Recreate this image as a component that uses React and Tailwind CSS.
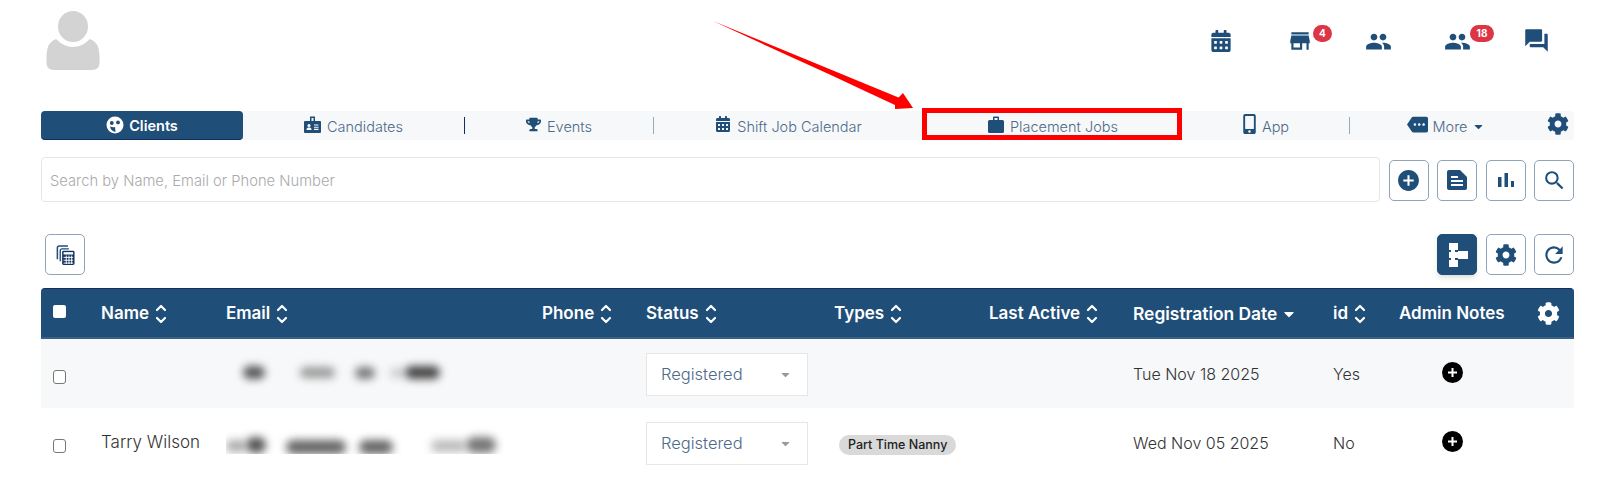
import { FaCalendarAlt, FaCog, FaTrophy, FaMobileAlt, FaCaretDown } from 'react-icons/fa';
import { MdStore, MdPeople, MdForum, MdMore, MdAddCircle, MdSearch, MdRefresh } from 'react-icons/md';

const Sort = () => (
    <svg width="12" height="20" viewBox="0 0 12 20" fill="none" stroke="white" strokeWidth="2.2" strokeLinecap="round" strokeLinejoin="round" className="shrink-0">
        <path d="M2 6 L6 2 L10 6" />
        <path d="M2 14 L6 18 L10 14" />
    </svg>
);

const Face = () => (
    <svg width="18" height="18" viewBox="0 0 18 18" className="-mt-[3px]">
        <circle cx="9" cy="9" r="8.5" fill="white" />
        <circle cx="5.8" cy="7" r="1.9" fill="#1f4e79" />
        <circle cx="12" cy="6.4" r="1.9" fill="#1f4e79" />
        <path d="M4 10.5 Q8 12 9 10.8 L9.5 16 Q5 15 4 10.5Z" fill="#1f4e79" />
    </svg>
);

const Badge = () => (
    <svg width="17" height="17" viewBox="0 0 17 17">
        <path d="M6 0.5h5v4.5h5a1 1 0 0 1 1 1v10a1 1 0 0 1-1 1H1a1 1 0 0 1-1-1V6a1 1 0 0 1 1-1h5z" fill="#1f4e79" />
        <rect x="7.5" y="2" width="2" height="3" fill="#f7f8fa" />
        <circle cx="5" cy="9.5" r="1.5" fill="white" />
        <path d="M2.5 14c0-2 1-2.5 2.5-2.5S7.500 12 7.500 14z" fill="white" />
        <path d="M10 9h4.500M10 11.200h4.500M10 13.400h4.500" stroke="white" strokeWidth="1.100" />
    </svg>
);

const Bag = () => (
    <svg width="16" height="17" viewBox="0 0 16 17" fill="#1f4e79">
        <path d="M5 4V1.500A1 1 0 0 1 6 .5h4a1 1 0 0 1 1 1V4h3.500A1.500 1.500 0 0 1 16 5.500V15.500A1.500 1.500 0 0 1 14.500 17H1.500A1.500 1.500 0 0 1 0 15.500V5.500A1.500 1.500 0 0 1 1.500 4zM6.500 4h3V2h-3z" fillRule="evenodd" />
    </svg>
);

const Doc = () => (
    <svg width="20" height="20" viewBox="0 0 20 20">
        <path d="M2 0H13L20 7V18A2 2 0 0 1 18 20H2A2 2 0 0 1 0 18V2A2 2 0 0 1 2 0Z" fill="#1f4e79" />
        <path d="M4 7h7M4 11h12M4 15h12" stroke="white" strokeWidth="2" />
    </svg>
);

const Bars = () => (
    <svg width="16" height="14" viewBox="0 0 16 14" fill="#1f4e79">
        <rect x="0" y="4" width="3.500" height="10" />
        <rect x="6.500" y="0" width="3.500" height="14" />
        <rect x="13" y="8" width="3" height="6" />
    </svg>
);

const Calculators = () => (
    <svg width="20" height="20" viewBox="0 0 20 21">
        <path d="M2 15V3a2 2 0 0 1 2-2h9" fill="none" stroke="#1f4e79" strokeWidth="1.600" />
        <path d="M5 17V6a2 2 0 0 1 2-2h7" fill="none" stroke="#1f4e79" strokeWidth="1.400" />
        <rect x="7" y="6" width="13" height="15" rx="1.500" fill="#12305f" />
        <rect x="8.500" y="7.500" width="10" height="2.500" fill="white" />
        <path d="M8.500 13h10M8.500 16h10M8.500 19h10M11.300 11v9M14.200 11v9M17 11v9" stroke="white" strokeWidth="1" />
    </svg>
);

const Tree = () => (
    <svg width="19" height="24" viewBox="0 0 19 24" fill="white" className="ml-[2px]">
        <path d="M0 0H9V7H6V9H9V15H6V17H9V24H0V17H2V15H0V9H2V7H0Z" />
        <rect x="9" y="8" width="10" height="8" />
    </svg>
);

const tabs = [
    { label: 'Candidates', icon: <Badge />, w: 'w-[221px]', sep: 'bg-[#12305f]' },
    { label: 'Events', icon: <FaTrophy className="text-[15px]" />, w: 'w-[188px]', sep: 'bg-[#9aa8b8]' },
    { label: 'Shift Job Calendar', icon: <FaCalendarAlt className="text-[16px]" />, w: 'w-[269px]' },
    { label: 'Placement Jobs', icon: <Bag />, w: 'w-[258px]' },
    { label: 'App', icon: <FaMobileAlt className="w-[13px] h-[20px]" />, w: 'w-[166px]', sep: 'bg-[#9aa8b8]' },
];

const columns = [
    { label: 'Name', sort: true, w: 'w-[125px]' },
    { label: 'Email', sort: true, w: 'w-[316px]' },
    { label: 'Phone', sort: true, w: 'w-[104px]' },
    { label: 'Status', sort: true, w: 'w-[188px]' },
    { label: 'Types', sort: true, w: 'w-[155px]' },
    { label: 'Last Active', sort: true, w: 'w-[144px]' },
    { label: 'Registration Date', caret: true, w: 'w-[200px]' },
    { label: 'id', sort: true, w: 'w-[66px]' },
];

const IconButton = ({ children, active }) => (
    <button className={`w-10 h-[41px] flex items-center justify-center rounded-[5px] border text-[#1f4e79] ${active ? 'bg-[#1f4e79] border-[#1f4e79] shadow-md' : 'bg-white border-[#8fa3ba]'}`}>
        {children}
    </button>
);

const Blob = ({ className }) => <div className={`rounded-full blur-[4px] ${className}`} />;

const StatusSelect = () => (
    <div className="w-[162px] h-[43px] mt-[1px] flex items-center justify-between bg-white border border-[#e6e6e6] pl-[14px] pr-[15px] text-[16.500px] font-light text-[#4d6a88]">
        Registered
        <FaCaretDown className="text-[13px] text-[#999]" />
    </div>
);

const Row = ({ bg, name, date, id, type, blobs }) => (
    <div className={`flex h-[69px] items-center ${bg}`}>
        <div className="w-[60px] pl-[12px] pt-[6px]">
            <div className="w-[13px] h-[14px] rounded-[3px] border border-[#777] bg-white" />
        </div>
        <div className="w-[125px] text-[17px] font-light text-[#333]">{name}</div>
        <div className="w-[316px] h-[69px]">{blobs}</div>
        <div className="w-[104px]" />
        <div className="w-[188px]"><StatusSelect /></div>
        <div className="w-[155px]">
            {type && (
                <span className="inline-block ml-[5px] px-[9px] h-[20px] leading-[20px] rounded-full bg-[#d9d9d9] text-[12.500px] font-medium text-[#222]">{type}</span>
            )}
        </div>
        <div className="w-[144px]" />
        <div className="w-[200px] text-[16px] font-light text-[#333]">{date}</div>
        <div className="w-[66px] text-[16px] font-light text-[#333]">{id}</div>
        <div className="w-[175px] pl-[43px]">
            <div className="w-[21px] h-[21px] rounded-full bg-black flex items-center justify-center -mt-[2px]">
                <svg width="11" height="11" viewBox="0 0 11 11"><path d="M5.500 1v9M1 5.500h9" stroke="white" strokeWidth="2" /></svg>
            </div>
        </div>
    </div>
);

export default function App() {
    return (
        <div className="relative w-[1600px] h-[479px] overflow-hidden bg-white pl-[41px] pr-[26px] font-['Inter','Liberation_Sans',sans-serif]">
            {/* arrow */}
            <svg className="absolute left-0 top-0 z-10 pointer-events-none" width="1600" height="130" viewBox="0 0 1600 130">
                <polygon points="713,21 767,46 800,61 833,76 867,92 895,105 895,109 913,108 903,93 898.500,97.500" fill="#ff0000" />
            </svg>

            {/* top bar */}
            <div className="flex justify-between h-[111px]">
                <svg className="ml-[5px] mt-[11px]" width="54" height="60" viewBox="0 0 54 60">
                    <ellipse cx="27" cy="15.500" rx="15" ry="15.500" fill="#d3d3d3" />
                    <path d="M10 28 Q18 36 27 36 Q36 36 44 28 Q53 31 53.500 44 V52 Q53.500 59 46 59 H8 Q0.500 59 0.500 52 V44 Q1 31 10 28Z" fill="#d3d3d3" />
                </svg>
                <div className="flex h-[62px] -mr-[2px] text-[#1f4e79]">
                    <div className="w-[79px] pt-[30px] flex justify-center"><FaCalendarAlt className="text-[22px]" /></div>
                    <div className="relative w-[79px] pt-[28px] flex justify-center">
                        <MdStore className="text-[26px]" />
                        <span className="absolute left-[53px] top-[25px] w-[19px] h-[17px] rounded-full bg-[#dc3545] text-white text-[10px] font-bold flex items-center justify-center">4</span>
                    </div>
                    <div className="w-[79px] pt-[28px] flex justify-center"><MdPeople className="text-[27px]" /></div>
                    <div className="relative w-[79px] pt-[28px] flex justify-center">
                        <MdPeople className="text-[27px]" />
                        <span className="absolute left-[52px] top-[25px] w-[24px] h-[17px] rounded-full bg-[#dc3545] text-white text-[10px] font-bold flex items-center justify-center">18</span>
                    </div>
                    <div className="w-[79px] pt-[27px] flex justify-center"><MdForum className="text-[27px]" /></div>
                </div>
            </div>

            {/* nav */}
            <div className="relative flex items-center h-[29px] bg-[#f7f8fa] rounded-[4px] text-[14.500px] font-light text-[#4d6a88]">
                <div className="w-[202px] h-[29px] pt-[2px] flex items-center justify-center gap-[5px] bg-[#1f4e79] border-b border-[#12305f] rounded-[4px] text-white font-semibold text-[14.500px]">
                    <Face /> Clients
                </div>
                {tabs.map((tab) => (
                    <div key={tab.label} className="flex items-center">
                        <div className={`flex items-center justify-center gap-[6px] pt-[2px] ${tab.w}`}>
                            <span className="text-[#1f4e79] -mt-[5px]">{tab.icon}</span>
                            {tab.label}
                        </div>
                        <span className={`w-px h-[17px] ${tab.sep || ''}`} />
                    </div>
                ))}
                <div className="w-[192px] pt-[2px] flex items-center justify-center gap-[4px]">
                    <MdMore className="text-[21px] text-[#1f4e79] -mt-[5px]" />
                    More
                    <FaCaretDown className="text-[13px] text-[#1f4e79]" />
                </div>
                <FaCog className="text-[22px] text-[#1f4e79] ml-[5px] -mt-[3px]" />
                {/* highlight box */}
                <div className="absolute left-[881px] -top-[3px] w-[260px] h-[32px] border-[5.500px] border-[#ff0000]" />
            </div>

            {/* search */}
            <div className="flex items-center mt-[17px] h-[45px]">
                <div className="flex-1 h-[45px] flex items-center px-[8px] pt-[4px] border border-[#e6e6e6] rounded-[4px] text-[14.750px] font-light text-[#aaa]">
                    Search by Name, Email or Phone Number
                </div>
                <div className="flex gap-[8.500px] ml-[8.500px] mt-[1px]">
                    <IconButton><MdAddCircle className="text-[25px]" /></IconButton>
                    <IconButton><Doc /></IconButton>
                    <IconButton><Bars /></IconButton>
                    <IconButton><MdSearch className="text-[25px]" /></IconButton>
                </div>
            </div>

            {/* toolbar */}
            <div className="flex items-center justify-between mt-[32px] pl-[4px]">
                <IconButton><Calculators /></IconButton>
                <div className="flex gap-[8.500px]">
                    <IconButton active><Tree /></IconButton>
                    <IconButton><FaCog className="text-[22px]" /></IconButton>
                    <IconButton><MdRefresh className="text-[26px]" /></IconButton>
                </div>
            </div>

            {/* table */}
            <div className="mt-[13px]">
                <div className="flex items-center h-[51px] pt-[2px] bg-[#1f4e79] border-t border-[#12305f] border-b-2 border-b-[#3a6288] rounded-t-[4px] text-white text-[17px] font-semibold">
                    <div className="w-[60px] pl-[12px]">
                        <div className="w-[13px] h-[13px] rounded-[2px] bg-white -mt-[5px]" />
                    </div>
                    {columns.map((col) => (
                        <div key={col.label} className={`flex items-center ${col.caret ? 'gap-[4px] text-[17.400px]' : 'gap-[6px]'} ${col.w}`}>
                            {col.label}
                            {col.sort && <Sort />}
                            {col.caret && <FaCaretDown className="text-[16px]" />}
                        </div>
                    ))}
                    <div className="w-[175px] flex items-center justify-between pr-[14px]">
                        Admin Notes
                        <FaCog className="text-[23px] -mt-[2px]" />
                    </div>
                </div>
                <Row
                    bg="bg-[#f7f8fa]"
                    date="Tue Nov 18 2025"
                    id="Yes"
                    blobs={
                        <div className="flex items-center pt-[27px] pl-[17px]">
                            <Blob className="w-[22px] h-[13px] bg-[#555]" />
                            <Blob className="w-[35px] h-[11px] ml-[35px] bg-[#999]" />
                            <Blob className="w-[20px] h-[12px] ml-[20px] bg-[#777]" />
                            <Blob className="w-[15px] h-[10px] ml-[15px] bg-[#ccc]" />
                            <Blob className="w-[35px] h-[13px] bg-[#444]" />
                        </div>
                    }
                />
                <Row
                    bg="bg-white"
                    name="Tarry Wilson"
                    date="Wed Nov 05 2025"
                    id="No"
                    type="Part Time Nanny"
                    blobs={
                        <div className="h-[46px] overflow-hidden flex items-start pt-[32px]">
                            <Blob className="w-[20px] h-[12px] bg-[#aaa]" />
                            <Blob className="w-[20px] h-[16px] -mt-[3px] bg-[#555]" />
                            <Blob className="w-[60px] h-[14px] ml-[20px] bg-[#666]" />
                            <Blob className="w-[34px] h-[14px] ml-[13px] bg-[#666]" />
                            <Blob className="w-[35px] h-[12px] ml-[38px] bg-[#bbb]" />
                            <Blob className="w-[30px] h-[16px] -mt-[3px] bg-[#777]" />
                        </div>
                    }
                />
            </div>
        </div>
    );
}
